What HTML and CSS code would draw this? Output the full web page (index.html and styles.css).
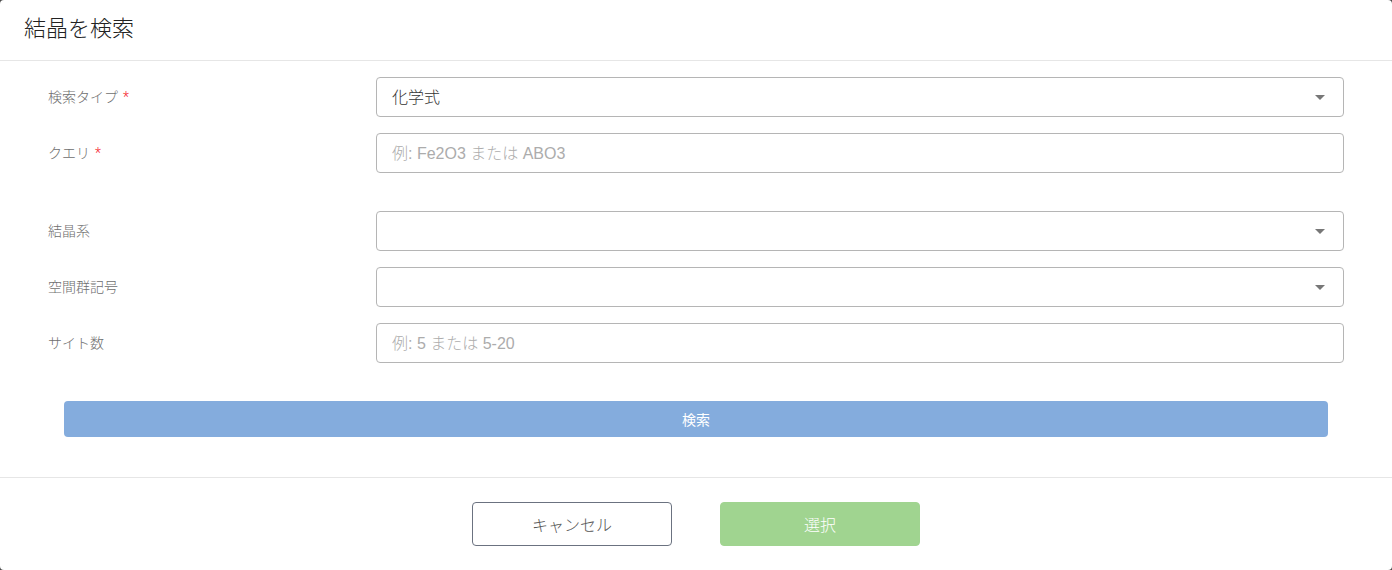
FILE: index.html
```html
<!DOCTYPE html>
<html lang="ja">
<head>
<meta charset="utf-8">
<title>結晶を検索</title>
<link rel="stylesheet" href="styles.css">
</head>
<body>
<div class="modal">
  <div class="modal-header">
    <h2 class="modal-title">結晶を検索</h2>
  </div>
  <div class="modal-body">
    <div class="form-row">
      <label class="form-label">検索タイプ<span class="req">*</span></label>
      <div class="field select">
        <span class="value">化学式</span>
        <span class="caret"></span>
      </div>
    </div>
    <div class="form-row">
      <label class="form-label">クエリ<span class="req">*</span></label>
      <div class="field">
        <span class="placeholder">例: Fe2O3 または ABO3</span>
      </div>
    </div>
    <div class="help-space"></div>
    <div class="form-row">
      <label class="form-label">結晶系</label>
      <div class="field select">
        <span class="value"></span>
        <span class="caret"></span>
      </div>
    </div>
    <div class="form-row">
      <label class="form-label">空間群記号</label>
      <div class="field select">
        <span class="value"></span>
        <span class="caret"></span>
      </div>
    </div>
    <div class="form-row">
      <label class="form-label">サイト数</label>
      <div class="field">
        <span class="placeholder">例: 5 または 5-20</span>
      </div>
    </div>
    <div class="search-wrap">
      <button class="btn-search">検索</button>
    </div>
  </div>
  <div class="modal-footer">
    <button class="btn btn-cancel">キャンセル</button>
    <button class="btn btn-select">選択</button>
  </div>
</div>
</body>
</html>
```

FILE: styles.css
```css
* { box-sizing: border-box; }
html, body { margin: 0; padding: 0; }
body {
  background: #4a4a4a;
  font-family: Roboto, "Noto Sans CJK JP", "Liberation Sans", sans-serif;
  font-weight: 300;
  width: 1392px;
  height: 570px;
  overflow: hidden;
}
.modal {
  width: 1392px;
  height: 570px;
  background: #fff;
  border-radius: 4px;
  display: flex;
  flex-direction: column;
}
.modal-header {
  height: 61px;
  border-bottom: 1px solid #e6e6e6;
  padding: 0 24px;
  display: flex;
  align-items: center;
}
.modal-title {
  margin: 0;
  font-size: 22px;
  font-weight: 300;
  color: #222;
  line-height: 1;
  padding-bottom: 2px;
}
.modal-body {
  padding: 16px 48px 40px 48px;
  border-bottom: 1px solid #e6e6e6;
}
.form-row {
  display: flex;
  align-items: center;
  margin-bottom: 16px;
}
.form-label {
  width: 328px;
  flex: none;
  font-size: 14px;
  color: #6e6e6e;
  padding-bottom: 3px;
}
.req {
  color: #f5222d;
  margin-left: 5px;
}
.field {
  flex: 1;
  height: 40px;
  border: 1px solid #b5b5b5;
  border-radius: 4px;
  padding: 0 15px;
  display: flex;
  align-items: center;
  font-family: "Liberation Sans", "Noto Sans CJK JP", sans-serif;
  font-size: 16px;
}
.value { color: #333; flex: 1; padding-bottom: 2px; }
.placeholder { color: #acacac; padding-bottom: 2px; }
.caret {
  width: 0;
  height: 0;
  border-left: 5px solid transparent;
  border-right: 5px solid transparent;
  border-top: 5px solid #777;
  margin-right: 3px;
}
.help-space { height: 22px; }
.search-wrap {
  padding: 22px 16px 0 16px;
}
.btn-search {
  width: 100%;
  height: 36px;
  border: none;
  border-radius: 4px;
  background: #84acdd;
  color: #fff;
  font-family: inherit;
  font-weight: 400;
  font-size: 14px;
}
.modal-footer {
  flex: 1;
  display: flex;
  justify-content: center;
  align-items: flex-start;
  gap: 48px;
  padding-top: 24px;
}
.btn {
  width: 200px;
  height: 44px;
  border-radius: 4px;
  font-family: inherit;
  font-weight: 300;
  font-size: 16px;
  padding-bottom: 2px;
}
.btn-cancel {
  background: #fff;
  border: 1px solid #6b7280;
  color: #555;
}
.btn-select {
  background: #a0d490;
  border: 1px solid #a0d490;
  color: #fff;
}
```
